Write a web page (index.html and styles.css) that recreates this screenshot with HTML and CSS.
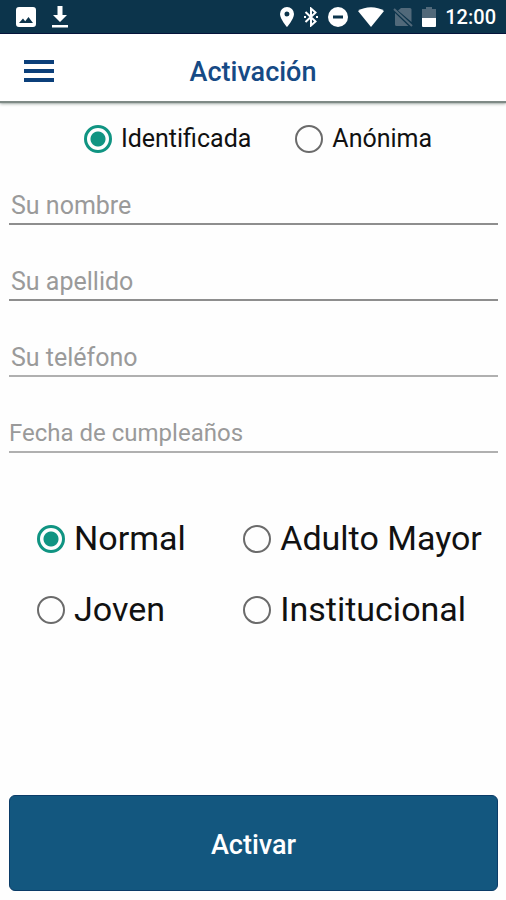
FILE: index.html
```html
<!DOCTYPE html>
<html lang="es">
<head>
<meta charset="utf-8">
<meta name="viewport" content="width=device-width, initial-scale=1">
<title>Activación</title>
<link rel="stylesheet" href="styles.css">
</head>
<body>
<div class="status">
  <div class="status-left">
    <svg width="20" height="20" viewBox="0 0 20 20" aria-hidden="true"><path fill="#fff" fill-rule="evenodd" d="M3 0h14a3 3 0 0 1 3 3v14a3 3 0 0 1-3 3H3a3 3 0 0 1-3-3V3a3 3 0 0 1 3-3zM3 16h14l-4.500-6-3.300 4.300L7 11.500z"/></svg>
    <svg width="16" height="22" viewBox="0 0 16 22" aria-hidden="true"><path fill="#fff" d="M5.500 0h5v9H15l-7 7-7-7h4.500zM0 19h16v2.500H0z"/></svg>
  </div>
  <div class="status-right">
    <svg width="16" height="20" viewBox="0 0 16 20" aria-hidden="true"><path fill="#fff" fill-rule="evenodd" d="M8 0a7 7 0 0 1 7 7c0 5-7 13-7 13S1 12 1 7a7 7 0 0 1 7-7zm0 4.500a2.500 2.500 0 1 0 0 5 2.500 2.500 0 0 0 0-5z"/></svg>
    <svg width="14" height="20" viewBox="0 0 14 20" aria-hidden="true"><path fill="none" stroke="#fff" stroke-width="2" d="M1.500 5l10 9.500L7 18.500v-17l4.500 4L1.500 15"/><path fill="#fff" d="M0 9h2v2H0zM12 9h2v2h-2z"/></svg>
    <svg width="22" height="20" viewBox="0 0 22 20" aria-hidden="true"><circle cx="11" cy="10" r="10" fill="#fff"/><path fill="#0c344b" d="M6 8.500h10v3H6z"/></svg>
    <svg width="26" height="20" viewBox="0 0 26 20" aria-hidden="true"><path fill="#fff" d="M0 4c7-5 19-5 26 0L13 20z"/></svg>
    <svg width="20" height="20" viewBox="0 0 20 20" aria-hidden="true"><path fill="#51697a" d="M8 1h9a1.500 1.500 0 0 1 1.500 1.500V15L5 3.500zM2 6l13.500 13H3.500A1.500 1.500 0 0 1 2 17.500z"/><path stroke="#51697a" stroke-width="2" d="M1 2l18 17"/></svg>
    <svg width="14" height="20" viewBox="0 0 14 20" aria-hidden="true"><path fill="#51697a" d="M4 0h6v2h4v9H0V2h4z"/><path fill="#fff" d="M0 11h14v8a1 1 0 0 1-1 1H1a1 1 0 0 1-1-1z"/></svg>
    <span class="clock">12:00</span>
  </div>
</div>
<header class="bar">
  <button class="menu" type="button" aria-label="Menú">
    <svg width="30" height="24" viewBox="0 0 30 24" aria-hidden="true"><path fill="#0b3f7a" d="M0 0h30v4H0zM0 9h30v4H0zM0 18h30v4H0z"/></svg>
  </button>
  <h1 class="title">Activación</h1>
</header>
<form class="form">
  <div class="modes" role="radiogroup" aria-label="Modo">
    <label class="option"><input type="radio" name="modo" checked><span>Identificada</span></label>
    <label class="option"><input type="radio" name="modo"><span>Anónima</span></label>
  </div>
  <div class="fields">
    <input class="field" type="text" placeholder="Su nombre" aria-label="Su nombre">
    <input class="field" type="text" placeholder="Su apellido" aria-label="Su apellido">
    <input class="field light" type="tel" placeholder="Su teléfono" aria-label="Su teléfono">
    <input class="field light date" type="text" placeholder="Fecha de cumpleaños" aria-label="Fecha de cumpleaños">
  </div>
  <div class="types" role="radiogroup" aria-label="Tipo">
    <label class="option"><input type="radio" name="tipo" checked><span>Normal</span></label>
    <label class="option"><input type="radio" name="tipo"><span>Adulto Mayor</span></label>
    <label class="option"><input type="radio" name="tipo"><span>Joven</span></label>
    <label class="option"><input type="radio" name="tipo"><span>Institucional</span></label>
  </div>
  <button class="submit" type="submit">Activar</button>
</form>
</body>
</html>
```
FILE: styles.css
```css
* {
  box-sizing: border-box;
}

body {
  margin: 0;
  min-height: 100vh;
  display: flex;
  flex-direction: column;
  background: #fefefe;
  color: #111;
  font-family: Roboto, "Liberation Sans", sans-serif;
}

.status {
  display: flex;
  justify-content: space-between;
  align-items: center;
  height: 34px;
  padding: 0 10px 0 16px;
  background: #0c344b;
  border-bottom: 1px solid #06133a;
}

.status-left,
.status-right {
  display: flex;
  align-items: center;
}

.status-left {
  gap: 16px;
}

.status-right {
  gap: 9px;
}

.clock {
  color: #fff;
  font-size: 20px;
  font-weight: 500;
  line-height: 24px;
}

.bar {
  display: grid;
  grid-template-columns: 1fr auto 1fr;
  align-items: center;
  height: 67px;
  padding: 9px 24px 0;
  background: #fff;
  box-shadow: 0 2px 1px #7f8a86, 0 3px 3px #a9b2ae;
}

.menu {
  justify-self: start;
  display: flex;
  padding: 0;
  border: 0;
  background: none;
}

.title {
  margin: 0;
  color: #164a85;
  font-size: 27px;
  font-weight: 500;
  line-height: 32px;
}

.form {
  flex: 1;
  display: flex;
  flex-direction: column;
  padding: 0 8px 9px 9px;
}

.modes {
  display: flex;
  justify-content: center;
  gap: 44px;
  padding-left: 9px;
  font-size: 25px;
  line-height: 76px;
}

.option {
  display: flex;
  align-items: center;
  gap: 9px;
}

.option input {
  appearance: none;
  flex: none;
  width: 28px;
  height: 28px;
  margin: 0;
  border: 2px solid #6b6b6b;
  border-radius: 50%;
}

.option input:checked {
  border: 3px solid #109482;
  background: radial-gradient(circle, #109482 7px, transparent 8px);
}

.fields {
  display: flex;
  flex-direction: column;
  gap: 28px;
}

.field {
  width: 100%;
  height: 48px;
  padding: 10px 2px 0;
  border: 0;
  border-bottom: 2px solid #8e8e8e;
  border-radius: 0;
  outline: 0;
  background: none;
  color: #111;
  font: 25px Roboto, "Liberation Sans", sans-serif;
}

.light {
  border-color: #b0b0b0;
}

.date {
  padding-left: 0;
  font-size: 24px;
}

.field::placeholder {
  color: #9a9a9a;
  opacity: 1;
}

.types {
  display: grid;
  grid-template-columns: 17fr 21fr;
  margin-top: 50px;
  padding-left: 28px;
  font-size: 34px;
  line-height: 71px;
}

.submit {
  height: 96px;
  margin-top: auto;
  padding: 4px 0 0;
  border: 1px solid #0b3c68;
  border-radius: 6px;
  background: #13577f;
  color: #fff;
  font: 500 27px Roboto, "Liberation Sans", sans-serif;
}
```
